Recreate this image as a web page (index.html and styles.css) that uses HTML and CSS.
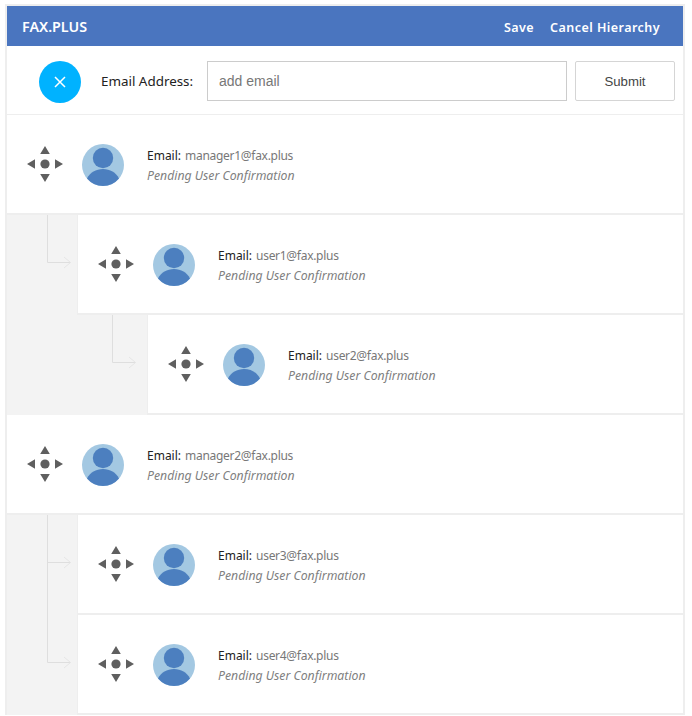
FILE: index.html
```html
<!DOCTYPE html>
<html lang="en">
<head>
<meta charset="utf-8">
<title>FAX.PLUS Hierarchy</title>
<link rel="stylesheet" href="styles.css">
</head>
<body>
<svg class="defs" width="0" height="0" aria-hidden="true">
  <defs>
    <symbol id="move" viewBox="0 0 36 36">
      <path d="M18 0l4.800 8h-9.600zM18 36l-4.800-8h9.600zM0 18l8-4.800v9.600zM36 18l-8 4.800v-9.600z" fill="#5f5f5f"/>
      <circle cx="18" cy="18" r="4.600" fill="#5f5f5f"/>
    </symbol>
    <symbol id="avatar" viewBox="0 0 42 42">
      <circle cx="21" cy="21" r="21" fill="#a3c8e2"/>
      <circle cx="21" cy="14" r="10.200" fill="#4c7fbf"/>
      <path d="M5 34.500C8 28.500 14 25 21 25s13 3.500 16 9.500A21 21 0 0 1 21 42 21 21 0 0 1 5 34.500z" fill="#4c7fbf"/>
    </symbol>
    <symbol id="link-end" viewBox="0 0 32 60">
      <path d="M.5 0v47.500h23" fill="none" stroke="#dedede"/>
      <path d="M17 42l6.500 5.500-6.500 5.500" fill="none" stroke="#e6e6e6"/>
    </symbol>
    <symbol id="link-through" viewBox="0 0 32 100">
      <path d="M.5 0v100M.5 47.500h23" fill="none" stroke="#dedede"/>
      <path d="M17 42l6.500 5.500-6.500 5.500" fill="none" stroke="#e6e6e6"/>
    </symbol>
  </defs>
</svg>
<main class="frame">
  <header class="topbar">
    <span class="brand">FAX.PLUS</span>
    <nav class="actions"><a>Save</a><a>Cancel Hierarchy</a></nav>
  </header>
  <form class="toolbar">
    <span class="close"><svg width="12" height="12" viewBox="0 0 12 12"><path d="M1 1l10 10M11 1L1 11" stroke="#fff" stroke-width="1.500" fill="none"/></svg></span>
    <label class="field-label" for="email">Email Address:</label>
    <input class="field" id="email" type="text" placeholder="add email">
    <button class="submit" type="button">Submit</button>
  </form>

  <section class="node">
    <div class="row">
      <svg class="move"><use href="#move"/></svg>
      <svg class="avatar"><use href="#avatar"/></svg>
      <div class="info">
        <div class="line"><b>Email:</b><span>manager1@fax.plus</span></div>
        <div class="status">Pending User Confirmation</div>
      </div>
    </div>
    <div class="children">
      <section class="node">
        <svg class="link link-short"><use href="#link-end"/></svg>
        <div class="row">
          <svg class="move"><use href="#move"/></svg>
          <svg class="avatar"><use href="#avatar"/></svg>
          <div class="info">
            <div class="line"><b>Email:</b><span>user1@fax.plus</span></div>
            <div class="status">Pending User Confirmation</div>
          </div>
        </div>
        <div class="children">
          <section class="node">
            <svg class="link link-short link-deep"><use href="#link-end"/></svg>
            <div class="row">
              <svg class="move"><use href="#move"/></svg>
              <svg class="avatar"><use href="#avatar"/></svg>
              <div class="info">
                <div class="line"><b>Email:</b><span>user2@fax.plus</span></div>
                <div class="status">Pending User Confirmation</div>
              </div>
            </div>
          </section>
        </div>
      </section>
    </div>
  </section>

  <section class="node">
    <div class="row">
      <svg class="move"><use href="#move"/></svg>
      <svg class="avatar"><use href="#avatar"/></svg>
      <div class="info">
        <div class="line"><b>Email:</b><span>manager2@fax.plus</span></div>
        <div class="status">Pending User Confirmation</div>
      </div>
    </div>
    <div class="children">
      <section class="node">
        <svg class="link link-tall"><use href="#link-through"/></svg>
        <div class="row">
          <svg class="move"><use href="#move"/></svg>
          <svg class="avatar"><use href="#avatar"/></svg>
          <div class="info">
            <div class="line"><b>Email:</b><span>user3@fax.plus</span></div>
            <div class="status">Pending User Confirmation</div>
          </div>
        </div>
      </section>
      <section class="node">
        <svg class="link link-short"><use href="#link-end"/></svg>
        <div class="row">
          <svg class="move"><use href="#move"/></svg>
          <svg class="avatar"><use href="#avatar"/></svg>
          <div class="info">
            <div class="line"><b>Email:</b><span>user4@fax.plus</span></div>
            <div class="status">Pending User Confirmation</div>
          </div>
        </div>
      </section>
    </div>
  </section>
</main>
</body>
</html>
```
FILE: styles.css
```css
* { box-sizing: border-box; }

body {
  margin: 0;
  padding: 4px 7px 0 5px;
  background: #fff;
  font-family: "Noto Sans", sans-serif;
}

.defs { position: absolute; }

.frame {
  border: 2px solid #eee;
  border-bottom: 0;
  background: #fff;
}

.topbar {
  height: 40px;
  background: #4a75bf;
  color: #fff;
  display: flex;
  align-items: center;
  justify-content: space-between;
  padding: 0 23px 0 15px;
}

.brand { font: 600 14.300px "Noto Sans", sans-serif; }

.actions {
  display: flex;
  gap: 16px;
  padding-top: 3px;
  font: 600 12.500px "Noto Sans", sans-serif;
  letter-spacing: 0.45px;
}

.toolbar {
  height: 69px;
  border-bottom: 1px solid #eee;
  display: flex;
  align-items: flex-start;
  padding: 15px 8px 0 32px;
}

.close {
  width: 42px;
  height: 42px;
  border-radius: 50%;
  background: #00b2ff;
  display: flex;
  align-items: center;
  justify-content: center;
}

.field-label {
  margin-left: 20px;
  width: 106px;
  line-height: 40px;
  font-size: 13.400px;
  color: #222;
}

.field {
  width: 360px;
  height: 40px;
  border: 1px solid #ccc;
  padding: 0 11px;
  font: 14px "Liberation Sans", sans-serif;
  color: #555;
  outline: 0;
}

.field::placeholder { color: #777; opacity: 1; }

.submit {
  margin-left: 8px;
  width: 100px;
  height: 40px;
  border: 1px solid #d5d5d5;
  border-radius: 2px;
  background: #fff;
  font: 13.200px "Liberation Sans", sans-serif;
  color: #444;
}

.node { position: relative; }

.row {
  height: 100px;
  background: #fff;
  border-bottom: 2px solid #eee;
  display: flex;
  align-items: center;
  padding-left: 19.500px;
}

.children > .node > .row { border-left: 1px solid #eee; }

.move { width: 36px; height: 36px; flex: none; }

.avatar { width: 42px; height: 42px; flex: none; margin: 2px 23px 0 19.500px; }

.info { padding-top: 3px; }

.line { display: flex; align-items: baseline; gap: 4px; line-height: 20px; }

.line b { font-weight: 400; font-size: 12px; color: #222; }

.line span { font-size: 12px; letter-spacing: -0.29px; color: #777; }

.status {
  font-size: 12.250px;
  font-style: italic;
  line-height: 20px;
  color: #808080;
}

.children {
  padding-left: 70px;
  background: #f3f3f3;
}

.link { position: absolute; left: -30px; top: 0; width: 32px; }

.link-short { height: 60px; }

.link-tall { height: 100px; }

.link-deep { left: -35px; }
```
